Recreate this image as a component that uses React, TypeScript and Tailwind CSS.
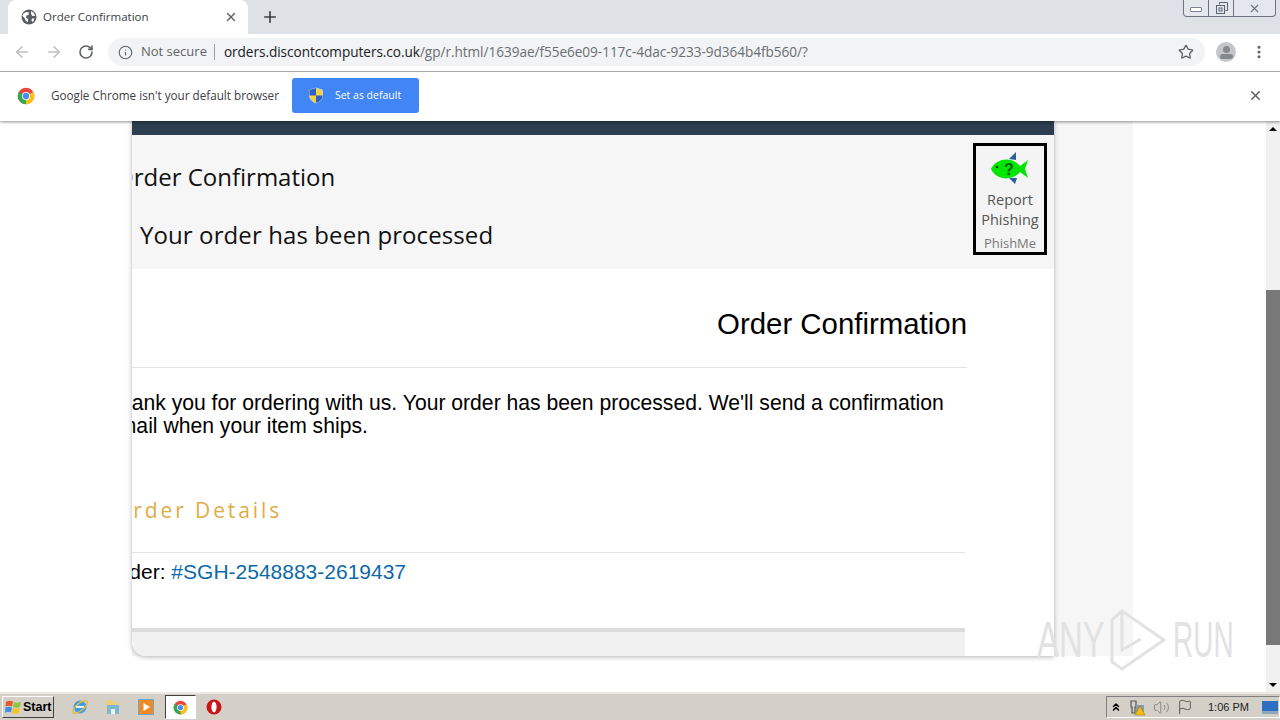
import { ArrowLeft, ArrowRight, RotateCw, Info, Star, X, Plus, MoreVertical, Volume2, Flag, ChevronsUp } from "lucide-react";

function ChromeLogo({ size = 18 }: { size?: number }) {
  return (
    <svg width={size} height={size} viewBox="0 0 24 24">
      <circle cx="12" cy="12" r="11" fill="#e8453c" />
      <path d="M12 12 L2.5 6.5 A11 11 0 0 0 12 23 Z" fill="#34a853" />
      <path d="M12 12 L12 23 A11 11 0 0 0 21.6 6.5 Z" fill="#fbc116" />
      <circle cx="12" cy="12" r="5.4" fill="#fff" />
      <circle cx="12" cy="12" r="4.2" fill="#4a8af4" />
    </svg>
  );
}

function ShieldIcon() {
  return (
    <svg width="16" height="17" viewBox="0 0 16 17">
      <path d="M8 1 L14.5 3 V8.5 C14.5 12 11.5 15 8 16 C4.5 15 1.5 12 1.5 8.5 V3 Z" fill="#f5d33f" stroke="#cbd8ef" strokeWidth="0.8" />
      <path d="M8 1 V8.5 H1.5 V3 Z" fill="#2f62c4" />
      <path d="M8 8.5 H14.5 C14.5 12 11.5 15 8 16 Z" fill="#2f62c4" />
    </svg>
  );
}

function TabGlobe() {
  return (
    <svg width="16" height="16" viewBox="0 0 16 16">
      <circle cx="8" cy="8" r="7.5" fill="#5a5d61" />
      <path d="M2 5 L5 3 L8 3.5 L7.5 6 L5.5 6.5 L5 8.5 L7 10 L7 13 L5 12 L3.5 9 L1.5 7 Z" fill="#fff" />
      <path d="M10 2 L13 4 L14 7 L11.5 7 L10 5 Z" fill="#fff" />
      <path d="M11 9.5 L13.5 9.5 L12 13 L10.5 12 Z" fill="#fff" />
    </svg>
  );
}

function Fish() {
  return (
    <svg width="40" height="36" viewBox="0 0 40 36">
      <path d="M19 8 L26 1 L26 9 Z" fill="#2a5f9e" />
      <path d="M19 27 L25 33 L27 27 Z" fill="#2a5f9e" />
      <path d="M1 18 C6 7 22 5 30 15 L38 9 L35 18 L38 27 L30 21 C22 31 6 29 1 18 Z" fill="#00e600" />
      <circle cx="7" cy="16" r="1.3" fill="#0b3d0b" />
      <text x="14" y="24" fontSize="16" fontWeight="700" fill="#0b5d0b" fontFamily="Liberation Sans, sans-serif">?</text>
    </svg>
  );
}

function WinFlag() {
  return (
    <svg width="17" height="16" viewBox="0 0 17 16">
      <path d="M1 3 C3 1.5 5 1.5 8 2.5 L7 7.5 C4.5 6.5 2.5 6.5 0.5 7.5 Z" fill="#e8592a" />
      <path d="M9 3 C11 4 13.5 4 16 2.5 L15 8 C12.5 9 10.5 9 8 8 Z" fill="#8cc63f" />
      <path d="M0.5 8.5 C2.5 7.5 4.5 7.5 7 8.5 L6 13.5 C4 12.5 2 12.5 0 14 Z" fill="#3a8ee6" />
      <path d="M8 9 C10 10 12.5 10 15 9 L14 14 C11.5 15 9.5 15 7 14 Z" fill="#f7c325" />
    </svg>
  );
}

function Taskbar() {
  return (
    <div className="h-[28px] shrink-0 bg-[#d4d0c8] border-t-2 border-t-[#ece9e2] flex items-center font-['Liberation_Sans',sans-serif]">
      <div className="ml-[2px] w-[52px] h-[22px] flex items-center gap-[1px] pl-[2px] bg-[#d4d0c8] border border-t-white border-l-white border-r-[#404040] border-b-[#404040] text-[12.5px] font-bold text-black">
        <WinFlag />
        <span>Start</span>
      </div>
      <div className="ml-[17px] flex items-center">
        <svg width="18" height="18" viewBox="0 0 18 18">
          <circle cx="9" cy="9" r="6.5" fill="#3f9ee6" />
          <rect x="5" y="8" width="8" height="1.8" fill="#fff" />
          <ellipse cx="9" cy="9" rx="9" ry="3.5" transform="rotate(-40 9 9)" fill="none" stroke="#e6b93c" strokeWidth="1.4" />
        </svg>
        <svg className="ml-[15px]" width="18" height="18" viewBox="0 0 18 18">
          <path d="M2 2 H8 L10 4 H15 V16 H2 Z" fill="#e9cf7e" />
          <rect x="3" y="7" width="12" height="9" fill="#7db7d8" />
          <rect x="7" y="11" width="4" height="5" fill="#e8f2f8" />
        </svg>
        <svg className="ml-[16px]" width="16" height="16" viewBox="0 0 16 16">
          <rect x="0.5" y="0.5" width="15" height="15" fill="#f08a24" stroke="#6fa7d1" />
          <path d="M5.5 4 L12 8 L5.5 12 Z" fill="#fff" />
        </svg>
        <div className="ml-[11px] w-[31px] h-[24px] flex items-center justify-center bg-white border border-t-[#404040] border-l-[#404040] border-r-white border-b-white">
          <ChromeLogo size={15} />
        </div>
        <svg className="ml-[10px]" width="16" height="16" viewBox="0 0 16 16">
          <circle cx="8" cy="8" r="7.5" fill="#c81414" />
          <ellipse cx="8" cy="8" rx="2.6" ry="5.4" fill="#fff" />
        </svg>
      </div>
      <div className="ml-auto w-[174px] h-[22px] flex items-center border border-t-[#808080] border-l-[#808080] border-r-white border-b-white text-[#222]">
        <ChevronsUp size={12} strokeWidth={3} className="ml-[3px] text-black" />
        <svg className="ml-[7px]" width="17" height="17" viewBox="0 0 17 17">
          <path d="M2 2 H7 V8 H6 V14 H3 V8 H2 Z" fill="none" stroke="#555" strokeWidth="1.2" />
          <rect x="7" y="6" width="8" height="7" fill="#8a9aaa" />
          <path d="M11 7 L16 16 H6 Z" fill="#f4c20d" stroke="#8a6d00" strokeWidth="0.5" />
        </svg>
        <Volume2 size={17} strokeWidth={1.4} className="ml-[7px] text-[#888]" />
        <Flag size={16} strokeWidth={1.4} className="ml-[7px] text-[#555]" />
        <span className="ml-[15px] text-[11px] w-[44px]">1:06 PM</span>
        <svg className="ml-[10px]" width="16" height="14" viewBox="0 0 16 14">
          <rect width="16" height="11" y="1" fill="#2d6fc0" />
          <rect width="16" height="3" y="11" fill="#8fa5b8" />
        </svg>
      </div>
    </div>
  );
}

export default function App() {
  return (
    <div className="relative w-[1280px] h-[720px] overflow-hidden bg-white flex flex-col font-['Open_Sans',sans-serif]">
      {/* tab strip */}
      <div className="h-[34px] shrink-0 bg-[#dee1e6] flex relative">
        <div className="ml-[8px] w-[240px] h-[34px] bg-white rounded-t-[8px] flex items-center pl-[13px] pr-[10px] text-[#3c4043]">
          <TabGlobe />
          <span className="ml-[6px] text-[11.5px] flex-1">Order Confirmation</span>
          <X size={14} strokeWidth={2.4} className="text-[#5f6368]" />
        </div>
        <Plus size={18} strokeWidth={2.2} className="ml-[13px] mt-[8px] text-[#3c4043]" />
        <div className="absolute right-[4px] top-0 w-[93px] h-[17px] flex bg-[#e4e7ec] border border-t-0 border-[#6d7480] rounded-b-[4px] text-[#5a6470]">
          <div className="w-[25px] border-r border-[#6d7480] flex items-center justify-center">
            <div className="w-[12px] h-[5px] border border-[#7a8490] bg-white rounded-[1px] mt-[3px]" />
          </div>
          <div className="w-[25px] border-r border-[#6d7480] flex items-center justify-center">
            <svg width="13" height="13" viewBox="0 0 13 13" fill="none" stroke="#5a6470">
              <path d="M4.5 2.5 V0.5 H12.5 V8.5 H10.5" />
              <rect x="1.5" y="3.5" width="8" height="8" />
              <rect x="4" y="6" width="3" height="3" />
            </svg>
          </div>
          <div className="flex-1 flex items-center justify-center">
            <X size={13} strokeWidth={2} className="text-[#6d7480]" />
          </div>
        </div>
      </div>
      {/* toolbar */}
      <div className="h-[38px] shrink-0 bg-white border-b border-[#b8b8b8] flex items-center pb-[1px]">
        <ArrowLeft size={18} strokeWidth={2} className="ml-[13px] text-[#bcbfc4]" />
        <ArrowRight size={18} strokeWidth={2} className="ml-[14px] text-[#bcbfc4]" />
        <RotateCw size={16} strokeWidth={2.4} className="ml-[15px] text-[#5f6368]" />
        <div className="ml-[14px] w-[1097px] h-[28px] bg-[#f1f3f4] rounded-full flex items-center pl-[10px] pr-[11px]">
          <Info size={15} strokeWidth={1.8} className="text-[#5f6368]" />
          <span className="ml-[8px] text-[13px] text-[#5f6368]">Not secure</span>
          <div className="ml-[7px] w-px h-[16px] bg-[#9aa0a6]" />
          <span className="ml-[9px] text-[13.6px] text-[#202124] tracking-[-0.04px]">
            orders.discontcomputers.co.uk<span className="text-[#6a6e73]">/gp/r.html/1639ae/f55e6e09-117c-4dac-9233-9d364b4fb560/?</span>
          </span>
          <Star size={16} strokeWidth={2} className="ml-auto text-[#5f6368]" />
        </div>
        <div className="ml-[11px] w-[20px] h-[20px] rounded-full bg-[#c4c6c9] flex flex-col items-center justify-center overflow-hidden">
          <div className="w-[7px] h-[7px] rounded-full bg-[#85888c]" />
          <div className="w-[13px] h-[5px] mt-[1px] rounded-full bg-[#85888c]" />
        </div>
        <MoreVertical size={16} strokeWidth={2.6} className="ml-[15px] text-[#5f6368]" />
      </div>
      {/* default browser bar */}
      <div className="h-[49px] shrink-0 bg-white flex items-center pb-[2px] shadow-[0_1px_3px_rgba(0,0,0,0.45)] relative z-10">
        <div className="ml-[17px]"><ChromeLogo /></div>
        <span className="ml-[16px] text-[11.7px] text-[#3c4043]">Google Chrome isn't your default browser</span>
        <div className="ml-[13px] w-[127px] h-[35px] bg-[#4285f4] rounded-[3px] flex items-center pl-[16px]">
          <ShieldIcon />
          <span className="ml-[11px] text-[10.5px] text-white">Set as default</span>
        </div>
        <X size={15} strokeWidth={2.4} className="ml-auto mr-[17px] text-[#5f6368]" />
      </div>
      {/* page */}
      <div className="flex-1 min-h-0 flex relative">
        <div className="flex-1 min-w-0 overflow-hidden pl-[132px] flex items-start">
          <div className="w-[1001px] h-[535px] bg-[#f6f6f6] flex">
            <div className="w-[922px] h-[535px] bg-white rounded-bl-[14px] overflow-hidden flex flex-col shadow-[0_1px_5px_rgba(0,0,0,0.3)]">
              <div className="h-[14px] shrink-0 bg-[#2c3e50]" />
              <div className="h-[134px] shrink-0 bg-[#f6f6f6] flex justify-between pr-[7px] text-[#111] text-[24px]">
                <div className="overflow-hidden">
                  <div className="-ml-[17px] mt-[24px] leading-[36px]">Order Confirmation</div>
                  <div className="ml-[8px] mt-[22px] leading-[36px] tracking-[0.1px]">Your order has been processed</div>
                </div>
                <div className="mt-[8px] w-[74px] h-[112px] border-[3px] border-black bg-[#f4f4f4] flex flex-col items-center pt-[5px] text-[#555]">
                  <Fish />
                  <span className="text-[14.5px] leading-[20px] mt-[3px]">Report</span>
                  <span className="text-[14.5px] leading-[20px]">Phishing</span>
                  <span className="text-[13px] leading-[18px] mt-[4px] text-[#777]">PhishMe</span>
                </div>
              </div>
              <div className="flex-1 min-h-0 w-[833px] flex flex-col font-['Liberation_Sans',sans-serif] text-black">
                <div className="h-[99px] shrink-0 border-b border-[#e2e2e2] text-right text-[29.4px] leading-[36px] pt-[37px] -mr-[2px]">Order Confirmation</div>
                <div className="h-[102px] shrink-0 pt-[23px] overflow-hidden text-[21.15px] leading-[23px] whitespace-nowrap">
                  <div className="-ml-[25px]">Thank you for ordering with us. Your order has been processed. We'll send a confirmation</div>
                  <div className="-ml-[25px]">email when your item ships.</div>
                </div>
                <div className="h-[83px] shrink-0 border-b border-[#e2e2e2] overflow-hidden pt-[25px] font-['Open_Sans',sans-serif] text-[21px] leading-[30px] tracking-[2.9px] text-[#e0ad45] whitespace-nowrap">
                  <div className="-ml-[18px]">Order Details</div>
                </div>
                <div className="h-[75px] shrink-0 overflow-hidden pt-[7px] text-[21px] leading-[24px] whitespace-nowrap">
                  <div className="-ml-[26px]">Order: <span className="text-[#0d6aa8]">#SGH-2548883-2619437</span></div>
                </div>
                <div className="flex-1 border-t-[4px] border-[#dcdcdc] bg-[#f1f1f1]" />
              </div>
            </div>
            <div className="flex-1" />
          </div>
        </div>
        {/* scrollbar */}
        <div className="w-[14px] shrink-0 bg-[#f1f1f1] flex flex-col items-center">
          <div className="h-[15px] shrink-0 flex items-center justify-center">
            <div className="w-0 h-0 border-x-[4px] border-x-transparent border-b-[4px] border-b-black" />
          </div>
          <div className="h-[154px] shrink-0" />
          <div className="w-full h-[355px] shrink-0 bg-[#787878]" />
          <div className="flex-1" />
          <div className="h-[15px] shrink-0 flex items-center justify-center">
            <div className="w-0 h-0 border-x-[4px] border-x-transparent border-t-[4px] border-t-black" />
          </div>
        </div>
        {/* watermark */}
        <div className="absolute left-[1037px] top-[487px] flex items-center text-[#e2e2e2] font-['Liberation_Sans',sans-serif] text-[50px] leading-[60px] whitespace-nowrap">
          <span className="w-[72px] origin-left scale-x-[0.66]">ANY</span>
          <svg width="58" height="64" viewBox="0 0 58 64" fill="none" stroke="#e2e2e2" strokeWidth="3">
            <path d="M13 3 L55 32 L13 61 L3 54 V12 Z" />
            <path d="M13 3 V42 L32 31" />
          </svg>
          <span className="ml-[6px] w-[60px] origin-left scale-x-[0.56]">RUN</span>
        </div>
      </div>
      <Taskbar />
    </div>
  );
}
